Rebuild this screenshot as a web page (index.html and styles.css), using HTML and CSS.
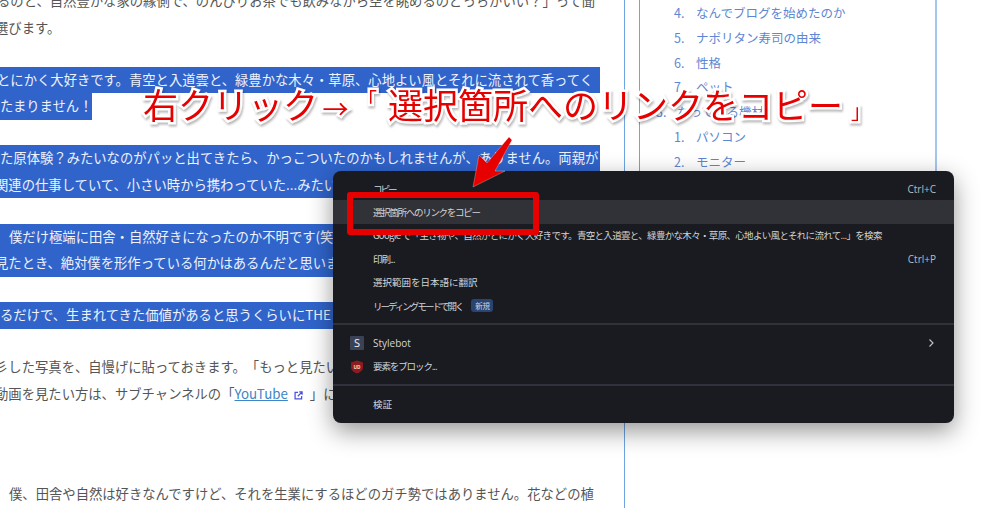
FILE: index.html
```html
<!DOCTYPE html>
<html lang="ja">
<head>
<meta charset="utf-8">
<title>右クリック</title>
<link rel="stylesheet" href="styles.css">
</head>
<body>
<div class="page">
  <main class="article">
    <p class="para">
      <span class="line cut-m">るのと、自然豊かな家の縁側で、のんびりお茶でも飲みながら空を眺めるのどっちがいい？」って聞</span>
      <span class="line cut-l">選びます。</span>
    </p>
    <p class="para sel">
      <span class="line cut-m">とにかく大好きです。青空と入道雲と、緑豊かな木々・草原、心地よい風とそれに流されて香ってく</span>
      <span class="line short">たまりません！</span>
    </p>
    <p class="para sel">
      <span class="line">た原体験？みたいなのがパッと出てきたら、かっこついたのかもしれませんが、ありません。両親が</span>
      <span class="line cut-l">関連の仕事していて、小さい時から携わっていた...みたいな感じでもないです。</span>
    </p>
    <p class="para sel">
      <span class="line indent">僕だけ極端に田舎・自然好きになったのか不明です(笑)。ただ、</span>
      <span class="line cut-l">見たとき、絶対僕を形作っている何かはあるんだと思います。</span>
    </p>
    <p class="para sel">
      <span class="line">るだけで、生まれてきた価値があると思うくらいにTHE・田舎が好きです。</span>
    </p>
    <p class="para">
      <span class="line cut-l">彡した写真を、自慢げに貼っておきます。「もっと見たい</span>
      <span class="line cut-l">動画を見たい方は、サブチャンネルの「<a class="link" href="#">YouTube</a>
        <svg class="ext" viewBox="0 0 10 10" aria-hidden="true"><path d="M4.500 1.500H1.200v7.300h7.300V5.500M5.800 1h3.200v3.200M9 1 4.200 5.800" fill="none" stroke="currentColor" stroke-width="1.400"/></svg>
        」に</span>
    </p>
    <div class="spacer"></div>
    <p class="para">
      <span class="line indent">僕、田舎や自然は好きなんですけど、それを生業にするほどのガチ勢ではありません。花などの植</span>
    </p>
  </main>
  <aside class="side">
    <div class="toc">
      <ol class="toc-list sub">
        <li><span class="num">4.</span>なんでブログを始めたのか</li>
        <li><span class="num">5.</span>ナポリタン寿司の由来</li>
        <li><span class="num">6.</span>性格</li>
        <li><span class="num">7.</span>ペット</li>
      </ol>
      <ol class="toc-list top">
        <li><span class="num">3.</span>なっている機材</li>
      </ol>
      <ol class="toc-list sub">
        <li><span class="num">1.</span>パソコン</li>
        <li><span class="num">2.</span>モニター</li>
      </ol>
    </div>
  </aside>
</div>

<div class="menu">
  <div class="row"><span class="jp kana">コピー</span><span class="key">Ctrl+C</span></div>
  <div class="row active"><span class="jp tight">選択箇所へのリンクをコピー</span></div>
  <div class="row"><span class="jp search">Google で「生き物や、自然がとにかく大好きです。青空と入道雲と、緑豊かな木々・草原、心地よい風とそれに流れて...」を検索</span></div>
  <div class="row"><span class="jp">印刷...</span><span class="key">Ctrl+P</span></div>
  <div class="row"><span class="jp kanji">選択範囲を日本語に翻訳</span></div>
  <div class="row"><span class="jp kana">リーディング モードで開く</span><span class="badge">新規</span></div>
  <div class="sep"></div>
  <div class="row">
    <span class="ico ico-s">S</span><span class="latin">Stylebot</span>
    <svg class="chev" viewBox="0 0 8 10" aria-hidden="true"><path d="M2.500 1.500 6 5 2.500 8.500" fill="none" stroke="currentColor" stroke-width="1.100"/></svg>
  </div>
  <div class="row">
    <svg class="ico ico-ub" viewBox="0 0 14 14" aria-hidden="true"><path d="M7 .6 13 2.400V7c0 3.200-2.600 5.400-6 6.500C3.600 12.400 1 10.200 1 7V2.400Z" fill="#8d1c22"/><text x="7" y="8.600" text-anchor="middle" font-size="4.800" font-weight="700" fill="#f3d9d9">UD</text></svg>
    <span class="jp">要素をブロック...</span>
  </div>
  <div class="sep"></div>
  <div class="row"><span class="jp kanji">検証</span></div>
  <div class="redbox"></div>
</div>

<svg class="arrow" viewBox="0 0 60 70" aria-hidden="true"><path d="M6 65 12 33 20 41 42 15 45 18 28 49 38 49Z" fill="#e60000" stroke="#fff" stroke-opacity=".35" stroke-width=".8"/></svg>
<div class="headline">右クリック<span class="mark">→</span><span class="open">「</span>選択箇所へのリンクをコピー<span class="close">」</span></div>
</body>
</html>
```
FILE: styles.css
```css
* { box-sizing: border-box; }
html, body { margin: 0; height: 508px; overflow: hidden; background: #fff; }
body {
  position: relative;
  width: 1000px;
  font-family: "Noto Sans CJK JP", "Noto Sans", sans-serif;
  font-size: 13.33px;
  color: #555;
  text-spacing-trim: space-all;
}
.page { display: flex; height: 508px; overflow: hidden; }
.article {
  width: 625px;
  flex: none;
  height: 508px;
  border-right: 1px solid #6ea4e2;
  padding-right: 24px;
  overflow: hidden;
}
.para { margin: 0 0 25.6px; }
.para:first-child { margin-top: -12px; }
.line {
  display: block;
  height: 26.500px;
  line-height: 26.500px;
  white-space: nowrap;
  overflow: hidden;
}
.cut-l { text-indent: -5px; }
.cut-m { text-indent: -3px; }
.indent { text-indent: 9px; }
.sel .line { background: #3064cb; color: #eef2fb; }
.sel .short { width: 92px; }
.spacer { height: 48px; }
.link { color: #3d86c6; text-decoration: underline; }
.ext { width: 9px; height: 9px; margin: 0 4px 0 3px; color: #4750e0; vertical-align: -1px; }

.side { flex: none; margin-left: 14px; width: 298px; }
.toc {
  height: 300px;
  border-left: 1px solid #6ea4e2;
  border-right: 2px solid #a5c6ec;
  padding-top: 1px;
  color: #5f86d2;
  font-size: 12.500px;
}
.toc-list { list-style: none; margin: 0; padding: 0; }
.toc-list li { display: flex; height: 24.800px; line-height: 24.800px; }
.sub { padding-left: 34px; }
.top { padding-left: 16px; }
.num { width: 22px; flex: none; }
.top .num { width: 21px; }

.menu {
  position: absolute;
  left: 333px;
  top: 171px;
  width: 621px;
  height: 252px;
  padding: 6px 0;
  background: #191b20;
  border-radius: 8px;
  box-shadow: 0 8px 24px rgba(0, 0, 0, .42);
  color: #d3d5d9;
  font-size: 10px;
}
.row {
  display: flex;
  align-items: center;
  height: 23.400px;
  padding: 0 18px 0 40px;
  position: relative;
  white-space: nowrap;
}
.active { background: #303238; }
.jp { font-size: 9.500px; letter-spacing: -1.100px; }
.tight { letter-spacing: -1.300px; }
.kana { letter-spacing: -2px; }
.kanji { letter-spacing: 0; }
.search { letter-spacing: -.68px; }
.latin { font-family: "Open Sans", sans-serif; font-size: 10px; }
.key { margin-left: auto; font-family: "Open Sans", sans-serif; font-size: 10px; color: #b9bcc2; }
.sep { height: 2px; margin: 6px 0; background: #2f323b; }
.badge {
  margin-left: 9px;
  width: 22px;
  height: 13px;
  line-height: 13px;
  text-align: center;
  background: #2a4470;
  border-radius: 3px;
  color: #c3d4ee;
  font-size: 7.500px;
  letter-spacing: -.3px;
}
.ico { position: absolute; left: 17px; top: 5px; width: 14px; height: 14px; }
.ico-s {
  background: #3a4256;
  border-radius: 1px;
  color: #f1f2f4;
  font-family: "Open Sans", sans-serif;
  font-size: 11px;
  line-height: 14px;
  text-align: center;
}
.chev { margin-left: auto; margin-right: 1px; width: 8px; height: 10px; color: #c3c5ca; }
.redbox {
  position: absolute;
  left: 14px;
  top: 21px;
  width: 192px;
  height: 43px;
  border: 6px solid #e60000;
  border-radius: 3px;
}
.arrow { position: absolute; left: 467px; top: 122px; width: 60px; height: 70px; }
.headline {
  position: absolute;
  left: 143px;
  top: 78px;
  font-size: 35px;
  line-height: 52px;
  white-space: nowrap;
  color: #e60000;
  -webkit-text-stroke: 5px #fff;
  paint-order: stroke fill;
  filter: drop-shadow(1px 2px 1px rgba(0, 0, 0, .28));
}
.mark, .open, .close {
  display: inline-block;
  width: 35px;
  line-height: 35px;
}
.mark { font-size: 26px; text-align: center; }
.open { font-size: 20px; text-align: right; padding-right: 11px; vertical-align: 11px; }
.close { font-size: 20px; text-align: left; padding-left: 8px; }
```
